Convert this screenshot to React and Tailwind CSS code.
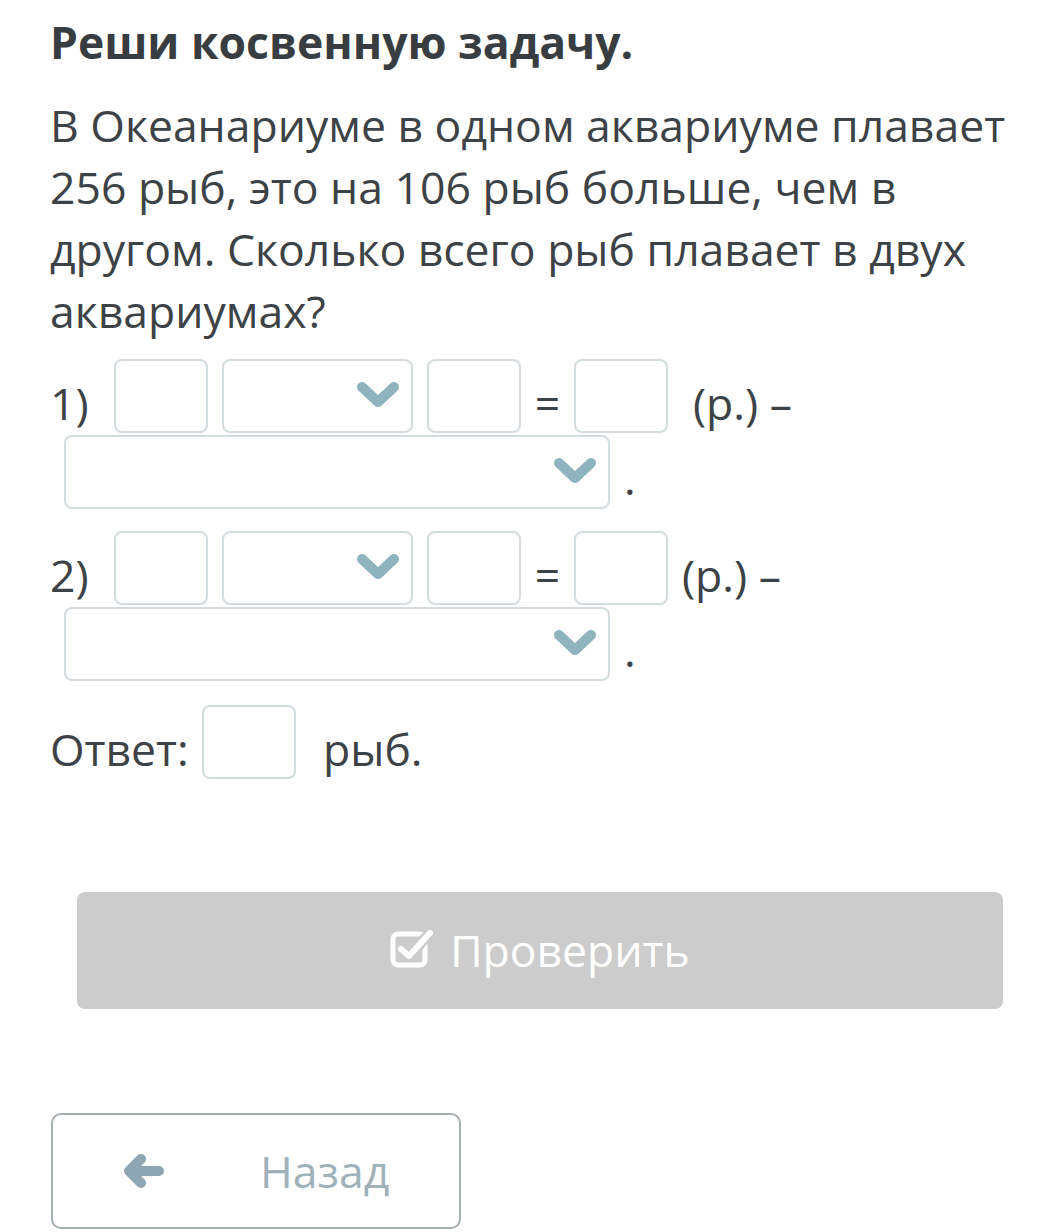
import React from "react";

const font = { fontFamily: '"Open Sans", "Noto Sans", sans-serif' };

function Box() {
  return <div className="w-[94px] h-[74px] shrink-0 rounded-[8px] border-2 border-[#d3dcde] bg-white" />;
}

function Chevron() {
  return (
    <svg width="42" height="28" viewBox="0 0 42 28" className="shrink-0">
      <path d="M5 5 L21 20 L37 5" fill="none" stroke="#8fb4be" strokeWidth="10" strokeLinecap="round" strokeLinejoin="round" />
    </svg>
  );
}

function Select({ w }) {
  return (
    <div className={`${w} h-[74px] shrink-0 rounded-[8px] border-2 border-[#d3dcde] bg-white flex items-center justify-end pr-[12px]`}>
      <Chevron />
    </div>
  );
}

function Step({ n, gapR }) {
  return (
    <div className="flex flex-col gap-[2px]">
      <div className="flex items-center h-[74px]">
        <span className="w-[64px] shrink-0 pt-[14px]">{n})</span>
        <Box />
        <div className="w-[14px]" />
        <Select w="w-[191px]" />
        <div className="w-[14px]" />
        <Box />
        <span className="w-[53px] text-center shrink-0 pt-[14px]">=</span>
        <Box />
        <span className={`${gapR} shrink-0`} />
        <span className="whitespace-nowrap pt-[14px]">(р.) –</span>
      </div>
      <div className="flex items-end h-[74px] pl-[14px]">
        <Select w="w-[546px]" />
        <span className="ml-[14px] leading-[62px]">.</span>
      </div>
    </div>
  );
}

export default function App() {
  return (
    <div className="w-[1058px] h-[1232px] bg-white text-[#3d4246] overflow-hidden" style={font}>
      <div className="pl-[50px] pr-[40px]">
        <h1 className="pt-[14px] text-[44.5px] font-bold leading-[56px] text-[#383d42]">Реши косвенную задачу.</h1>
        <p className="mt-[24px] text-[44.5px] leading-[62px]">
          В Океанариуме в одном аквариуме плавает 256 рыб, это на 106 рыб больше, чем в другом. Сколько всего рыб плавает в двух аквариумах?
        </p>
        <div className="mt-[17px] text-[44.5px] flex flex-col gap-[22px]">
          <Step n="1" gapR="w-[25px]" />
          <Step n="2" gapR="w-[14px]" />
          <div className="flex items-center h-[74px] mt-[2px]">
            <span className="w-[152px] shrink-0 pt-[14px]">Ответ:</span>
            <Box />
            <span className="ml-[27px] pt-[14px]">рыб.</span>
          </div>
        </div>
      </div>
      <div className="mt-[113px] ml-[77px] w-[926px] h-[117px] rounded-[8px] bg-[#cccccc] flex items-center justify-center gap-[14px] text-white text-[44.5px]">
        <svg width="46" height="40" viewBox="0 0 46 40" className="mt-[-6px]">
          <rect x="3" y="6" width="32" height="31" rx="5" fill="none" stroke="white" strokeWidth="5" />
          <path d="M11 21 L19 28 L40 5" fill="none" stroke="#cccccc" strokeWidth="11" strokeLinecap="round" strokeLinejoin="round" />
          <path d="M11 21 L19 28 L40 5" fill="none" stroke="white" strokeWidth="6" strokeLinecap="round" strokeLinejoin="round" />
        </svg>
        <span>Проверить</span>
      </div>
      <div className="mt-[104px] ml-[51px] w-[410px] h-[116px] rounded-[10px] border-2 border-[#a7aeb2] flex items-center">
        <svg width="42" height="34" viewBox="0 0 42 34" className="ml-[70px]">
          <path d="M6 17 L18 5 M6 17 L18 29 M6 17 L36 17" fill="none" stroke="#8ea6b3" strokeWidth="10" strokeLinecap="round" strokeLinejoin="round" />
        </svg>
        <span className="ml-[95px] text-[44.5px] text-[#a0b1ba]">Назад</span>
      </div>
    </div>
  );
}
